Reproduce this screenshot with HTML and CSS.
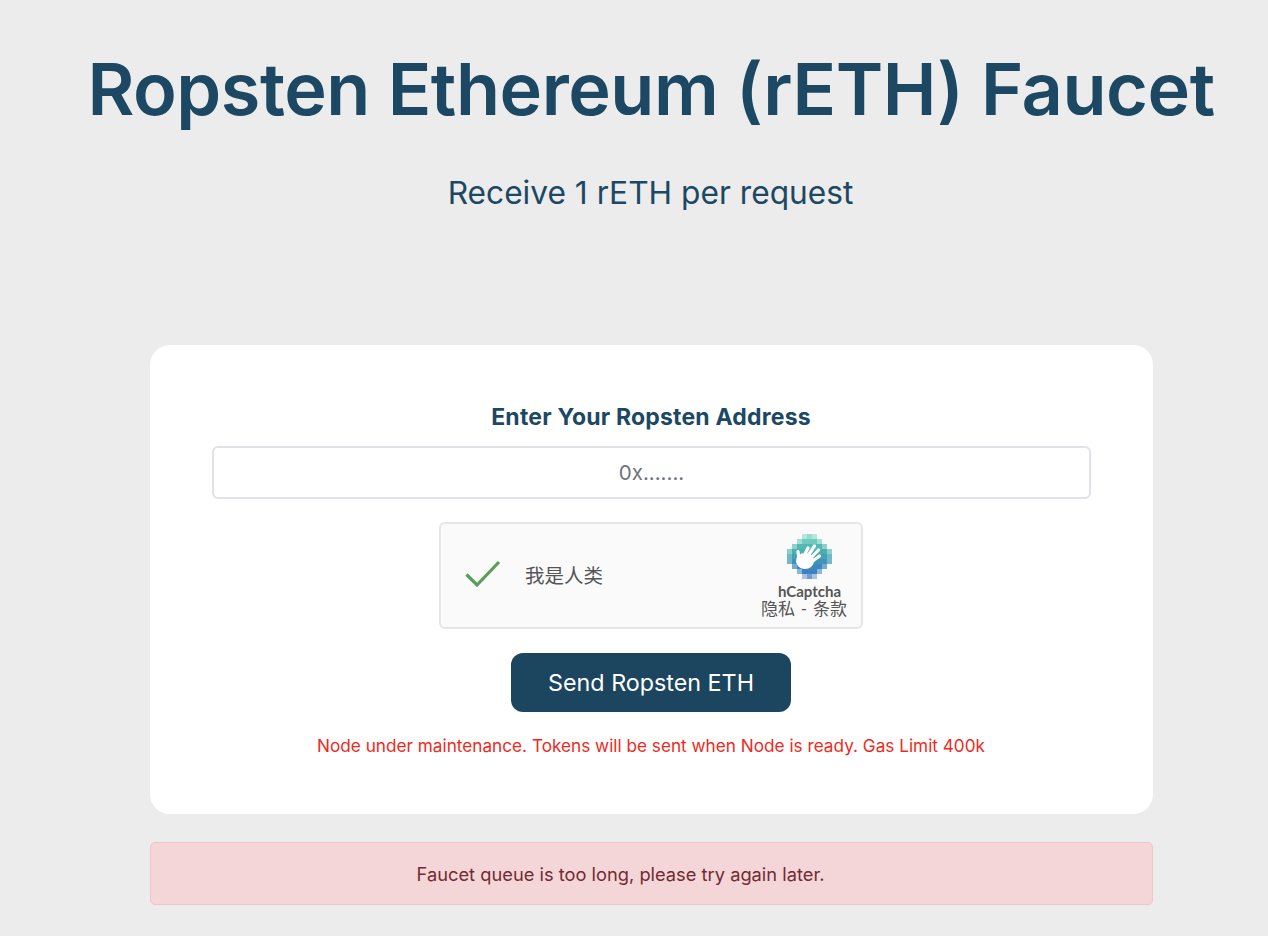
FILE: index.html
```html
<!DOCTYPE html>
<html>
<head>
<meta name="viewport" content="width=device-width, initial-scale=1">
<title>Ropsten Ethereum (rETH) Faucet</title>
<link rel="stylesheet" href="styles.css">
</head>
<body>

<div class="page">
    <h1 class="title">Ropsten Ethereum (rETH) Faucet</h1>
    <p class="subtitle">Receive 1 rETH per request</p>

    <div class="card">
        <label class="addressLabel" for="address">Enter Your Ropsten Address</label>
        <input type="text" id="address" class="addressInput" placeholder="0x.......">

        <div class="captcha">
            <svg class="captchaCheck" viewBox="0 0 36 28" width="36" height="28">
                <path d="M1.5 14.5 L12 25 L34 2" fill="none" stroke="#5a9f58" stroke-width="3.2"/>
            </svg>
            <span class="captchaText">我是人类</span>
            <div class="captchaBrand">
                <svg class="captchaLogo" viewBox="0 0 45 45" width="45" height="47" shape-rendering="crispEdges">
                    <g>
                        <rect x="15" y="0" width="5" height="5" fill="#b5e6dc"/>
                        <rect x="20" y="0" width="5" height="5" fill="#98dccf"/>
                        <rect x="25" y="0" width="5" height="5" fill="#b5e6dc"/>
                        <rect x="10" y="5" width="5" height="5" fill="#a3ddd4"/>
                        <rect x="15" y="5" width="15" height="5" fill="#6fcbbd"/>
                        <rect x="30" y="5" width="5" height="5" fill="#a3ddd4"/>
                        <rect x="5" y="10" width="5" height="5" fill="#8ed0cc"/>
                        <rect x="10" y="10" width="25" height="5" fill="#52bab0"/>
                        <rect x="35" y="10" width="5" height="5" fill="#8ed0cc"/>
                        <rect x="0" y="15" width="5" height="5" fill="#8ccfcd"/>
                        <rect x="5" y="15" width="35" height="5" fill="#4cb0ae"/>
                        <rect x="40" y="15" width="5" height="5" fill="#8ccfcd"/>
                        <rect x="0" y="20" width="5" height="5" fill="#6dbcc4"/>
                        <rect x="5" y="20" width="35" height="5" fill="#45a2b2"/>
                        <rect x="40" y="20" width="5" height="5" fill="#6dbcc4"/>
                        <rect x="0" y="25" width="5" height="5" fill="#74b6cb"/>
                        <rect x="5" y="25" width="35" height="5" fill="#3f95b8"/>
                        <rect x="40" y="25" width="5" height="5" fill="#74b6cb"/>
                        <rect x="5" y="30" width="5" height="5" fill="#74abd2"/>
                        <rect x="10" y="30" width="25" height="5" fill="#3b88be"/>
                        <rect x="35" y="30" width="5" height="5" fill="#74abd2"/>
                        <rect x="10" y="35" width="5" height="5" fill="#8fb5dc"/>
                        <rect x="15" y="35" width="15" height="5" fill="#3f80c0"/>
                        <rect x="30" y="35" width="5" height="5" fill="#8fb5dc"/>
                        <rect x="15" y="40" width="5" height="5" fill="#a8c4e4"/>
                        <rect x="20" y="40" width="5" height="5" fill="#719dd2"/>
                        <rect x="25" y="40" width="5" height="5" fill="#a8c4e4"/>
                    </g>
                    <g fill="none" stroke="#fff" stroke-linecap="round" stroke-width="3.2" shape-rendering="auto">
                        <path d="M11 17.5 L12 26"/>
                        <path d="M16 24 L21 14"/>
                        <path d="M19 25 L27.5 12"/>
                        <path d="M22 26 L31.5 16"/>
                        <path d="M23 29 L32.5 22"/>
                    </g>
                    <ellipse cx="18" cy="27" rx="9" ry="8" fill="#fff" shape-rendering="auto"/>
                </svg>
                <div class="captchaName">hCaptcha</div>
                <div class="captchaLinks">隐私 - 条款</div>
            </div>
        </div>

        <button class="sendBtn">Send Ropsten ETH</button>
        <p class="notice">Node under maintenance. Tokens will be sent when Node is ready. Gas Limit 400k</p>
    </div>

    <div class="alert">Faucet queue is too long, please try again later.</div>
</div>

</body>
</html>
```

FILE: styles.css
```css
/* Reset */
* {
    box-sizing: border-box;
}

body {
    margin: 0;
    background: #ececec;
    color: #1c4863;
    font-family: Inter, "Noto Sans CJK SC", sans-serif;
    overflow: hidden;
}

/* Page column */
.page {
    width: 1003px;
    margin-left: 150px;
    display: flex;
    flex-direction: column;
    align-items: center;
}

/* Headings */
.title {
    margin: 47px 0 0 -1px;
    font-size: 72px;
    line-height: 84px;
    font-weight: 600;
    white-space: nowrap;
    letter-spacing: -0.45px;
}

.subtitle {
    margin: 42px 0 0 -2px;
    font-size: 31.7px;
    line-height: 40px;
    font-weight: 400;
}

/* White card */
.card {
    width: 100%;
    height: 469px;
    margin-top: 132px;
    padding: 59px 63px 0 62px;
    background: #fff;
    border-radius: 20px;
    display: flex;
    flex-direction: column;
    align-items: center;
}

.addressLabel {
    font-size: 23px;
    line-height: 26px;
    font-weight: 700;
    letter-spacing: 0.2px;
}

.addressInput {
    flex: none;
    align-self: flex-start;
    width: 879px;
    height: 53px;
    margin-top: 16px;
    border: 2px solid #e0e2e5;
    border-radius: 6px;
    background: #fff;
    font-family: inherit;
    font-size: 20.5px;
    text-align: center;
}

.addressInput::placeholder {
    color: #6c757d;
    opacity: 1;
}

/* hCaptcha box */
.captcha {
    flex: none;
    width: 424px;
    height: 107px;
    margin-top: 23px;
    padding: 0 14px 3px 24px;
    background: #fafafa;
    border: 2px solid #e6e6e6;
    border-radius: 6px;
    display: flex;
    align-items: center;
}

.captchaCheck {
    flex: none;
}

.captchaText {
    margin-left: 24px;
    font-size: 19.5px;
    color: #555;
    font-family: Lato, "Noto Sans CJK SC", sans-serif;
}

.captchaBrand {
    margin: 3px 0 0 auto;
    display: flex;
    flex-direction: column;
    align-items: flex-end;
}

.captchaLogo {
    display: block;
    margin-right: 15px;
    filter: blur(0.6px);
}

.captchaName {
    margin: 2px 6px 0 0;
    font-family: Lato, sans-serif;
    font-size: 15px;
    line-height: 18px;
    font-weight: 700;
    color: #555;
}

.captchaLinks {
    font-family: Lato, "Noto Sans CJK SC", sans-serif;
    font-size: 17px;
    line-height: 18px;
    word-spacing: 1.5px;
    color: #555;
    white-space: nowrap;
}

/* Send button */
.sendBtn {
    width: 280px;
    height: 59px;
    margin-top: 24px;
    border: none;
    border-radius: 12px;
    background: #1c4560;
    color: #fff;
    font-family: inherit;
    font-size: 23.3px;
}

.notice {
    margin: 23px 0 0;
    font-size: 17.2px;
    line-height: 22px;
    color: #ee2a1e;
}

/* Error alert */
.alert {
    width: 100%;
    height: 63px;
    margin-top: 28px;
    padding-right: 62px;
    background: #f4d6d9;
    border: 1px solid #f0c4c8;
    border-radius: 5px;
    color: #722b30;
    font-size: 18.3px;
    display: flex;
    align-items: center;
    justify-content: center;
}
```
